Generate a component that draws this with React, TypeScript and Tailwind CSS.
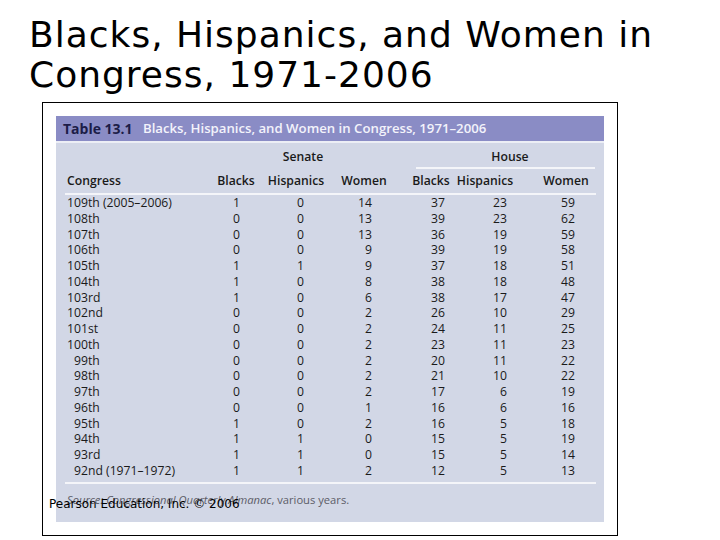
import React from 'react'

type Row = [string, number, number, number, number, number, number]

const rows: Row[] = [
  ['109th (2005–2006)', 1, 0, 14, 37, 23, 59],
  ['108th', 0, 0, 13, 39, 23, 62],
  ['107th', 0, 0, 13, 36, 19, 59],
  ['106th', 0, 0, 9, 39, 19, 58],
  ['105th', 1, 1, 9, 37, 18, 51],
  ['104th', 1, 0, 8, 38, 18, 48],
  ['103rd', 1, 0, 6, 38, 17, 47],
  ['102nd', 0, 0, 2, 26, 10, 29],
  ['101st', 0, 0, 2, 24, 11, 25],
  ['100th', 0, 0, 2, 23, 11, 23],
  ['99th', 0, 0, 2, 20, 11, 22],
  ['98th', 0, 0, 2, 21, 10, 22],
  ['97th', 0, 0, 2, 17, 6, 19],
  ['96th', 0, 0, 1, 16, 6, 16],
  ['95th', 1, 0, 2, 16, 5, 18],
  ['94th', 1, 1, 0, 15, 5, 19],
  ['93rd', 1, 1, 0, 15, 5, 14],
  ['92nd (1971–1972)', 1, 1, 2, 12, 5, 13],
]

const heads = ['Blacks', 'Hispanics', 'Women', 'Blacks', 'Hispanics', 'Women']

// congress numbers below 100 get a figure of indent
const isShort = (label: string) => /^\d\d[a-z]/.test(label)

const DataRow = ({ row }: { row: Row }) => (
  <div className="grid grid-cols-[145px_30px_64px_68px_73px_62px_68px] h-[15.75px] leading-[15.75px]">
    <div className={isShort(row[0]) ? 'pl-[9px]' : 'pl-[2px]'}>{row[0]}</div>
    {row.slice(1).map((n, i) => (
      <div key={i} className="text-right">
        {n}
      </div>
    ))}
  </div>
)

export default function App() {
  return (
    <div className="relative w-[720px] h-[540px] bg-white overflow-hidden">
      <h1 className="pl-[29px] pt-[15px] text-[36px] leading-[40px] tracking-[1px] font-normal text-black font-['DejaVu_Sans',sans-serif]">
        Blacks, Hispanics, and Women in
        <br />
        Congress, 1971-2006
      </h1>

      <div className="ml-[42px] mt-[7px] w-[576px] h-[434px] border border-black p-[13px]">
        <div className="h-full flex flex-col bg-[#d2d7e6] font-['Open_Sans',sans-serif] text-[12.2px] text-[#1a1a1a]">
          <div className="h-[25px] leading-[25px] bg-[#8a8cc5] pl-[7px] flex">
            <span className="w-[80px] text-[14px] font-bold text-[#1c1c48]">Table 13.1</span>
            <span className="text-[13.2px] font-semibold text-[#f3f3fb]">
              Blacks, Hispanics, and Women in Congress, 1971–2006
            </span>
          </div>
          <div className="h-[2px] bg-[#eceef5]" />

          <div className="pt-[6px] pl-[9px] pr-[8px]">
            <div className="grid grid-cols-[145px_186px_20px_179px] h-[20px] font-semibold leading-[16px]">
              <div />
              <div className="text-center">Senate</div>
              <div />
              <div className="border-b-2 border-[#f4f5f9] pl-[9px] text-center">House</div>
            </div>

            <div className="mt-[4px] grid grid-cols-[135px_72px_48px_88px_46px_62px_100px] h-[16px] leading-[16px] font-semibold">
              <div className="pl-[2px]">Congress</div>
              {heads.map((h, i) => (
                <div key={i} className="flex justify-center whitespace-nowrap">
                  {h}
                </div>
              ))}
            </div>

            <div className="mt-[4px] h-[2px] bg-[#f4f5f9]" />

            {rows.map((r) => (
              <DataRow key={r[0]} row={r} />
            ))}

            <div className="mt-[3px] h-[2px] bg-[#f4f5f9]" />

            <p className="mt-[8px] pl-[2px] leading-[16px] text-[11.2px] text-[#5c5c66]">
              <i>Source: Congressional Quarterly Almanac</i>, various years.
            </p>
          </div>
        </div>
      </div>

      <div className="absolute left-[49px] top-[497px] text-[12px] leading-[14px] text-black font-['DejaVu_Sans',sans-serif]">
        Pearson Education, Inc. © 2006
      </div>
    </div>
  )
}
